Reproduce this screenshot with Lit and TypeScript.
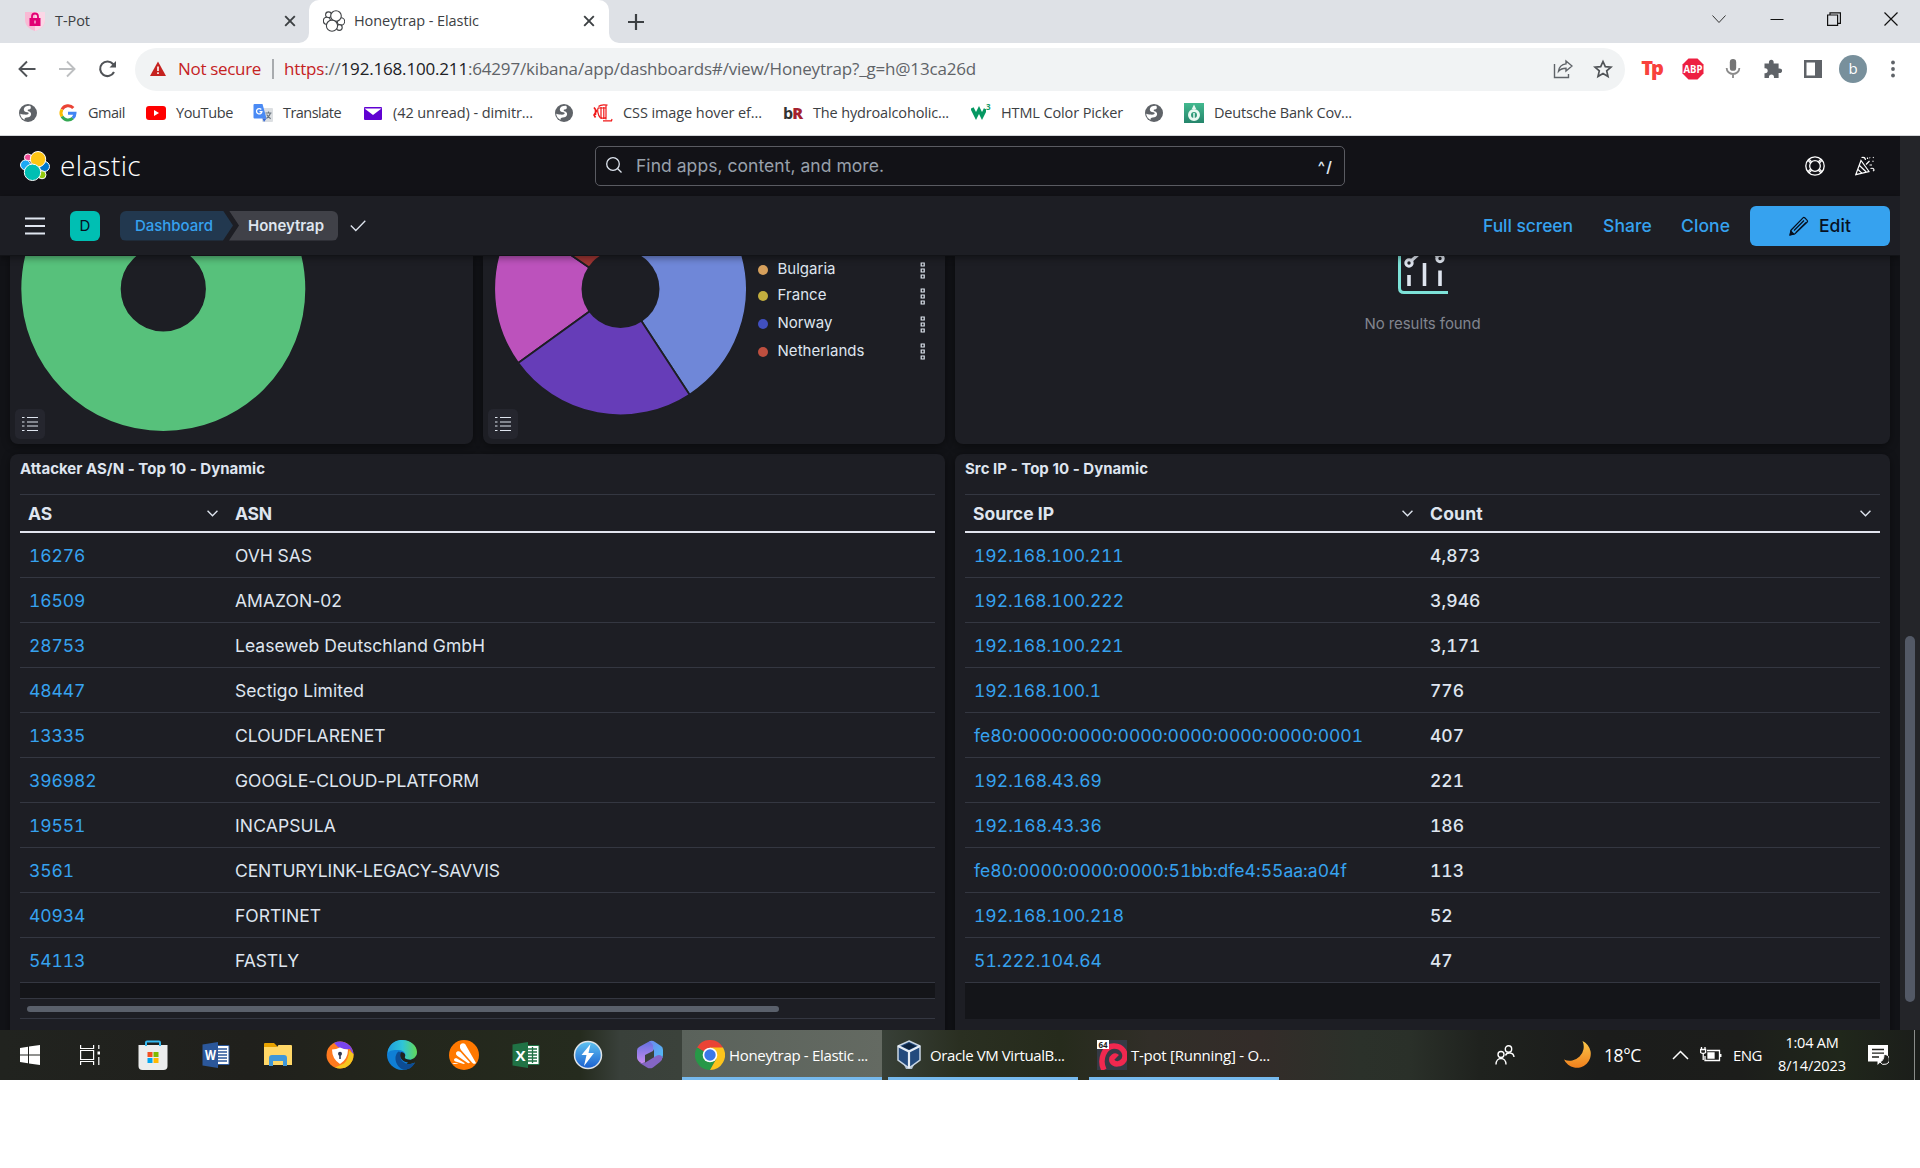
import { LitElement, html, css, svg } from "lit";
import { customElement, property, state } from "lit/decorators.js";

/* Text that spreads its letters to fill a given width. */
@customElement("fit-text")
class FitText extends LitElement {
  @property({ type: Number }) w = 0;
  @state() private spacing = 0;

  static styles = css`
    :host { display: inline-block; white-space: nowrap; }
    .run { display: inline-block; white-space: nowrap; }
  `;

  firstUpdated() {
    const run = this.renderRoot.querySelector(".run") as HTMLElement;
    const count = (this.textContent || "").length;
    if (count && this.w) this.spacing = (this.w - run.getBoundingClientRect().width) / count;
  }

  render() {
    return html`<span class="run" style="letter-spacing:${this.spacing}px"><slot></slot></span>`;
  }
}

const globe = svg`<svg class="i20" viewBox="0 0 20 20"><circle cx="10" cy="10" r="9" fill="#5f6368"/><path d="M12 2.800C9 2.600 6 3.800 5.800 6.200c-.2 2.200 1.600 2.700 3.400 3 1.600.3 1.900 1.300.8 2.100-1.200.8-4.200.4-7.800-.5.300 2.800 1.800 4.900 4.300 6.100-.2-1.500.5-2.400 2.300-2.400 2.200 0 4.100-1 4.300-3.200.1-2-1.400-2.700-2.700-3.100-1-.4-1-1.300 0-1.600 1.300-.4 2.200-.6 2.400-1.700.1-.8 0-1.500-.8-2.100z" fill="#fff"/></svg>`;

const icons: Record<string, unknown> = {
  globe,
  google: svg`<svg class="i20" viewBox="0 0 20 20" fill="none" stroke-width="3"><path d="M15.300 5A7 7 0 0 0 4 6.400" stroke="#ea4335"/><path d="M4 6.400a7 7 0 0 0 0 7.200" stroke="#fbbc05"/><path d="M4 13.600A7 7 0 0 0 14.800 15.200" stroke="#34a853"/><path d="M10 10.200h7a7 7 0 0 1-2.300 5" stroke="#4285f4"/></svg>`,
  youtube: svg`<svg class="i20" viewBox="0 0 20 20"><rect y="3" width="20" height="14" rx="3" fill="#f00"/><path d="M8 7l5 3-5 3z" fill="#fff"/></svg>`,
  translate: svg`<svg class="i20" viewBox="0 0 20 20"><rect x="9" y="5" width="11" height="14" rx="1" fill="#dcdfe2"/><path d="M12.500 10h6M15.500 8.500V10M17.500 10c-.6 2.400-2 4-4 5.500M13.700 11.500c.8 1.700 2 3 4 4.200" stroke="#6b7680" stroke-width="1.100" fill="none"/><path d="M1.500 1h8l4 14.500h-12a1 1 0 0 1-1-1V2a1 1 0 0 1 1-1z" fill="#4a8af4"/><path d="M9.500 15.500h4L11 19z" fill="#3367d6"/><path d="M8.300 6.500A2.700 2.700 0 1 0 8.900 8.600H6.500" fill="none" stroke="#fff" stroke-width="1.300"/></svg>`,
  mail: svg`<svg class="i20" viewBox="0 0 20 20"><rect x="1" y="4" width="18" height="13" rx="1" fill="#6001d2"/><path d="M1.500 5.500h17L10 12z" fill="#fff"/></svg>`,
  cil: svg`<svg class="i20" viewBox="0 0 20 20" fill="none" stroke="#f01818"><path d="M14.500 2.200Q8 1 5.500 3.500M8 4v12M10.800 4v12M13 2.500v14M10 17.800h8.500l.5-1.800M5.500 5h7M8 14.500q2.500 1.500 5 0" stroke-width="1.200"/><path d="M5.500 4.500C4 6 4.500 12 7.500 15" stroke-width="1.200"/><path d="M1 4.500l2.500 3.500L1 12l1.500 2.500M2.500 7v5" stroke-width="1.600"/></svg>`,
  dbank: svg`<svg class="i20" viewBox="0 0 20 20"><defs><linearGradient id="db" x2="0" y2="1"><stop stop-color="#43b98f"/><stop offset="1" stop-color="#25856b"/></linearGradient></defs><rect width="20" height="20" fill="url(#db)"/><path d="M10 1.500l2.200 4.500H7.800z" fill="#e9f9f2"/><circle cx="10" cy="12" r="4.500" fill="none" stroke="#e9f9f2" stroke-width="3"/><path d="M10 10v5" stroke="#e9f9f2" stroke-width="1.500"/></svg>`,
};

interface Mark { icon: string; label: string; w: number; }
const bookmarks: Mark[] = [
  { icon: "globe", label: "", w: 0 },
  { icon: "google", label: "Gmail", w: 37 },
  { icon: "youtube", label: "YouTube", w: 57 },
  { icon: "translate", label: "Translate", w: 58 },
  { icon: "mail", label: "(42 unread) - dimitr...", w: 140 },
  { icon: "globe", label: "", w: 0 },
  { icon: "cil", label: "CSS image hover ef...", w: 139 },
  { icon: "br", label: "The hydroalcoholic...", w: 136 },
  { icon: "w3", label: "HTML Color Picker", w: 122 },
  { icon: "globe", label: "", w: 0 },
  { icon: "dbank", label: "Deutsche Bank Cov...", w: 138 },
];

const asRows: [string, string, number][] = [
  ["16276", "OVH SAS", 77],
  ["16509", "AMAZON-02", 107],
  ["28753", "Leaseweb Deutschland GmbH", 250],
  ["48447", "Sectigo Limited", 129],
  ["13335", "CLOUDFLARENET", 150.5],
  ["396982", "GOOGLE-CLOUD-PLATFORM", 244],
  ["19551", "INCAPSULA", 101],
  ["3561", "CENTURYLINK-LEGACY-SAVVIS", 265],
  ["40934", "FORTINET", 86],
  ["54113", "FASTLY", 64],
];

const ipRows: [string, string, number, number][] = [
  ["192.168.100.211", "4,873", 149.5, 50.5],
  ["192.168.100.222", "3,946", 150, 50.5],
  ["192.168.100.221", "3,171", 149.5, 50.5],
  ["192.168.100.1", "776", 127, 34],
  ["fe80:0000:0000:0000:0000:0000:0000:0001", "407", 389, 34],
  ["192.168.43.69", "221", 128, 34],
  ["192.168.43.36", "186", 128, 34],
  ["fe80:0000:0000:0000:51bb:dfe4:55aa:a04f", "113", 373, 34],
  ["192.168.100.218", "52", 150, 22.7],
  ["51.222.104.64", "47", 128, 22.7],
];

const legend: [string, string, number][] = [
  ["Bulgaria", "#d6a05c", 58],
  ["France", "#c2ae3e", 49],
  ["Norway", "#4150c0", 55],
  ["Netherlands", "#be4f3f", 87],
];

const chevron = svg`<svg width="13" height="9" viewBox="0 0 14 10" fill="none" stroke="#dfe5ef" stroke-width="1.500"><path d="M1.500 2L7 7.500 12.500 2"/></svg>`;
const closeX = svg`<svg class="i14" viewBox="0 0 14 14" stroke="#3c4043" stroke-width="1.900"><path d="M2.200 2.200l9.600 9.600M11.800 2.200l-9.600 9.600"/></svg>`;

@customElement("app-root")
class AppRoot extends LitElement {
  static styles = css`
    :host { display: block; width: 1920px; height: 1168px; overflow: hidden; background: #fff; font-family: "Open Sans", "Noto Sans", sans-serif; }
    * { box-sizing: border-box; }
    svg { display: block; flex: none; }
    .i14 { width: 14px; height: 14px; }
    .i20 { width: 20px; height: 20px; }
    .i22 { width: 22px; height: 22px; }

    /* browser chrome */
    .strip { display: grid; grid-template-columns: 309px 300px 1fr; height: 43px; background: #fff; color: #3c4043; font-size: 14.500px; }
    .tab-off { display: grid; grid-template-columns: 20px 1fr 14px; gap: 10px; align-items: center; padding: 0 12px 2px 25px; background: #dee1e6; border-bottom-right-radius: 10px; }
    .tab-back { background: linear-gradient(#dee1e6 20px, #fff 20px); }
    .tab-on { height: 43px; display: grid; grid-template-columns: 22px 1fr 14px; gap: 9px; align-items: center; padding: 0 13px 2px 14px; background: #fff; border-radius: 10px 10px 0 0; }
    .tab-rest { display: flex; align-items: center; background: #dee1e6; border-bottom-left-radius: 10px; padding-left: 19px; }
    .win { margin-left: auto; display: grid; grid-template-columns: repeat(4, 57.300px); justify-items: center; padding-bottom: 6px; }
    .toolbar { display: grid; grid-template-columns: 135px 1490px 1fr; height: 48px; margin-top: 5px; align-items: center; }
    .nav-icons { display: grid; grid-template-columns: 20px 20px 20px; gap: 20px; padding: 0 0 6px 17px; align-items: center; }
    .omni { display: grid; grid-template-columns: 16px 83px 2px 1fr 22px 22px; height: 43px; border-radius: 22px; background: #f1f3f4; align-items: center; padding: 0 18px 2px 15px; font-size: 17px; color: #5f6368; margin-bottom: 5px; }
    .omni .warn { color: #c5221f; margin-left: 12px; }
    .omni .sep { width: 2px; height: 20px; background: #a8abae; margin-left: 23px; }
    .omni .url { margin-left: 33px; }
    .omni .red { color: #c5221f; }
    .omni .blk { color: #202124; }
    .omni .star { margin-left: 8px; }
    .omni .share { margin-left: -10px; }
    .ext { display: grid; grid-template-columns: repeat(7, 40px); justify-items: center; align-items: center; padding-left: 8px; padding-bottom: 6px; }
    .tp { font: 800 20px/22px "Open Sans", sans-serif; color: #f8423c; letter-spacing: -2px; margin: -3px 0 0 -3px; }
    .avatar { width: 28px; height: 28px; border-radius: 50%; background: #78909c; color: #fff; font-size: 15px; line-height: 27px; text-align: center; }
    .marks { display: grid; grid-template-columns: 40px 88px 107px 110px 191px 39px 190px 188px 173px 40px 180px; height: 39px; padding: 0 0 6px 18px; align-items: center; color: #3c4043; font-size: 14.500px; }
    .mark { display: flex; align-items: center; gap: 10px; }
    .br { width: 20px; font: 700 16px/20px "Open Sans", sans-serif; letter-spacing: -1px; color: #333; }
    .br b { color: #a5222f; }
    .w3 { display: flex; width: 20px; }
    .w3 small { font: 700 8px/8px "Open Sans", sans-serif; color: #159c6a; }
    .edge { height: 1px; background: #d4d6d9; }

    /* kibana */
    .app { display: grid; grid-template-columns: 1900px 20px; height: 894px; font-family: Inter, sans-serif; color: #dfe5ef; background: #121317; overflow: hidden; }
    .main { overflow: hidden; height: 894px; }
    .top { display: grid; grid-template-columns: 575px 750px 1fr; height: 60px; padding-left: 20px; align-items: center; background: #121217; }
    .brand { display: flex; gap: 10px; align-items: center; font: 300 28px/34px "Open Sans", sans-serif; color: #fff; }
    .brand fit-text { margin-top: -3px; }
    .logo { width: 30px; height: 30px; }
    .search { display: flex; align-items: center; height: 40px; border: 1px solid #5a5b62; border-radius: 5px; padding: 0 12px 2px 9px; font-size: 17.500px; color: #98a0ab; }
    .search .q { margin-left: 13px; }
    .search .key { margin-left: auto; color: #dfe5ef; font-weight: 600; font-size: 15px; margin-top: 3px; }
    .acts { display: flex; justify-content: flex-end; gap: 30px; padding-right: 25px; }
    .bar { position: relative; z-index: 2; display: flex; align-items: center; height: 60px; padding: 0 10px 0 25px; background: #1d1e24; border-bottom: 1px solid #121317; box-shadow: 0 2px 7px rgba(0, 0, 0, 0.4); }
    .sq { width: 30px; height: 30px; margin-left: 25px; border-radius: 6px; background: #00bfb3; color: #07101f; font-size: 15px; line-height: 30px; text-align: center; }
    .crumbs { display: flex; margin: 0 12px 0 20px; font-size: 15px; line-height: 30px; font-weight: 500; }
    .c1 { width: 113px; height: 30px; padding-left: 15px; border-radius: 6px 0 0 6px; background: #22384f; color: #36a2ef; clip-path: polygon(0 0, 103px 0, 113px 50%, 103px 100%, 0 100%); }
    .c2 { width: 109px; height: 30px; margin-left: -4px; padding-left: 19px; border-radius: 0 6px 6px 0; background: #404148; color: #dfe5ef; font-weight: 600; clip-path: polygon(0 0, 100% 0, 100% 100%, 0 100%, 10px 50%); }
    .menu { margin-left: auto; display: grid; grid-template-columns: 120px 78px 69px 140px; color: #36a2ef; font-size: 17.500px; align-items: center; font-weight: 500; }
    .edit { display: flex; gap: 10px; align-items: center; height: 40px; padding-left: 39px; border-radius: 6px; background: #36a2ef; color: #07101f; }
    .board { display: grid; grid-template-columns: 463px 462px 935px; column-gap: 10px; padding: 0 10px; }
    .panel { position: relative; background: #1d1e24; border-radius: 0 0 8px 8px; box-shadow: 0 2px 8px rgba(0, 0, 0, 0.45); height: 188px; overflow: hidden; }
    .clip { display: flex; }
    .legend { display: grid; grid-template-rows: 25px repeat(3, 27.700px); width: 180px; font-size: 15px; }
    .leg { display: grid; grid-template-columns: 10px 1fr 8px; gap: 9.500px; align-items: center; width: 169.500px; }
    .dot { width: 10px; height: 10px; border-radius: 50%; margin-top: 3px; }
    .kebab { width: 6px; height: 17px; margin-top: 3px; }
    .list { position: absolute; left: 5px; bottom: 5px; width: 30px; height: 30px; border-radius: 5px; background: #25262e; display: grid; place-items: center; }
    .none { display: flex; flex-direction: column; align-items: center; color: #81858f; font-size: 15px; gap: 20px; }
    .none svg { margin-left: 2px; }
    .tables { display: grid; grid-template-columns: 935px 935px; gap: 10px; padding: 10px 10px 0; }
    .tpanel { height: 590px; border-radius: 8px 8px 0 0; background: #1d1e24; box-shadow: 0 2px 8px rgba(0, 0, 0, 0.45); padding: 0 10px; }
    .title { height: 40px; line-height: 30px; font-size: 15px; font-weight: 700; }
    .hd { display: grid; height: 39px; border-top: 1px solid #343741; border-bottom: 2px solid #e2e4ee; align-items: center; font-size: 17.500px; font-weight: 700; }
    .row { display: grid; height: 45px; border-bottom: 1px solid #343741; align-items: center; font-size: 17.500px; }
    .as { grid-template-columns: 207px 1fr; }
    .ip { grid-template-columns: 457px 1fr; }
    .cell { display: flex; align-items: center; justify-content: space-between; padding: 0 8px; }
    .num { font-feature-settings: "tnum"; font-weight: 500; }
    .lnk { color: #36a2ef; padding-left: 9px; font-feature-settings: "tnum"; }
    .foot { height: 16px; background: #141519; border-bottom: 1px solid #343741; }
    .hs { height: 20px; padding: 7px 0 0 7px; border-bottom: 1px solid #343741; }
    .thumb { width: 752px; height: 6px; border-radius: 4px; background: #5a606b; }
    .foot2 { height: 36px; background: #141519; }
    .scroll { background: #242529; padding: 500px 5px 0; }
    .vthumb { height: 366px; border-radius: 5px; background: #535966; }

    /* taskbar */
    .task { display: grid; grid-template-columns: 682px 200px 6px 190px 11px 190px 1fr; height: 50px; color: #fff; font-size: 15px; background: linear-gradient(90deg, #21231f 0, #20201c 250px, #23261c 400px, #252b1e 580px, #39403a 620px, #3b423b 680px, #384038 880px, #2a2f21 960px, #262b1c 1060px, #312e28 1150px, #332c29 1260px, #2b312a 1360px, #2a3029 1410px, #1f221e 1480px, #1b1c1b 1600px, #1c1d1b 1740px, #20271b 1840px, #1b1d1a 1920px); }
    .pins { display: grid; grid-template-columns: 60px 60px 65px repeat(8, 62px); align-items: center; justify-items: center; height: 50px; }
    .btn { display: flex; align-items: center; height: 50px; border-bottom: 3px solid #76b9ed; padding-top: 3px; }
    .b1 { background: linear-gradient(90deg, #5a625b, #646a62); padding-left: 13px; gap: 4px; }
    .b2 { padding-left: 6px; gap: 6px; }
    .b3 { padding-left: 8px; gap: 4px; }
    .tray { display: grid; grid-template-columns: 236px 77px 80px 28px 33px 45px 68px 43px 1fr; align-items: center; height: 50px; }
    .tray .end { justify-self: end; }
    .clock { display: flex; flex-direction: column; align-items: center; line-height: 23px; font-size: 14.500px; margin-top: -3px; }
    .peek { width: 1px; height: 50px; margin: 0 5px 0 auto; background: #8a8c89; }
    .deg { font-size: 17.500px; padding-left: 12px; }
    .i30 { width: 30px; height: 30px; }
    .i28 { width: 28px; height: 28px; }
  `;

  private markIcon(name: string) {
    if (name === "br") return html`<span class="br">b<b>R</b></span>`;
    if (name === "w3")
      return html`<span class="w3"><svg width="15" height="20" viewBox="0 0 15 20" fill="none" stroke="#059862" stroke-width="3.600"><path d="M1 5l4 8 3-6 3 6 3.500-7"/></svg><small>3</small></span>`;
    return icons[name];
  }

  private browser() {
    return html`
      <div class="strip">
        <div class="tab-off">
          <svg width="20" height="20" viewBox="0 0 20 20"><path d="M0 1h20v8c0 5-4 9-10 11C4 18 0 14 0 9z" fill="#f9b9d4"/><path d="M10 1h10v8c0 5-4 9-10 11z" fill="#fbd7e6"/><rect x="4.500" y="7" width="11" height="8" fill="#e20074"/><path d="M7 7V5.500a3 3 0 0 1 6 0V7" fill="none" stroke="#e20074" stroke-width="1.800"/><path d="M10 9.500v3" stroke="#fff"/></svg>
          <fit-text w="35">T-Pot</fit-text>${closeX}
        </div>
        <div class="tab-back"><div class="tab-on">
          <svg class="i22" viewBox="0 0 22 22" fill="#fff" stroke="#404346" stroke-width="1.100"><circle cx="5.500" cy="4.800" r="2.900"/><circle cx="3.900" cy="10.800" r="3.500"/><circle cx="18" cy="11.400" r="3.700"/><circle cx="16.300" cy="17.500" r="2.900"/><circle cx="13" cy="6" r="5.300"/><circle cx="9" cy="15.700" r="5.600"/></svg>
          <fit-text w="125">Honeytrap - Elastic</fit-text>${closeX}
        </div></div>
        <div class="tab-rest">
          <svg width="16" height="16" viewBox="0 0 16 16" stroke="#3c4043" stroke-width="2.200"><path d="M8 0v16M0 8h16"/></svg>
          <div class="win">
            <svg width="14" height="14" viewBox="0 0 14 14" fill="none" stroke="#333"><path d="M.5 3.500L7 10.500 13.500 3.500"/></svg>
            <svg width="14" height="14" viewBox="0 0 14 14" stroke="#111"><path d="M.5 7.500h13"/></svg>
            <svg width="14" height="14" viewBox="0 0 14 14" fill="none" stroke="#111" stroke-width="1.200"><path d="M.6 3h10v10.400H.6zM3 3V.8h10.400v10.500H11"/></svg>
            <svg width="14" height="14" viewBox="0 0 14 14" stroke="#111" stroke-width="1.200"><path d="M.5.500l13 13M13.500.500l-13 13"/></svg>
          </div>
        </div>
      </div>
      <div class="toolbar">
        <div class="nav-icons">
          <svg class="i20" viewBox="0 0 20 20" fill="none" stroke="#505357" stroke-width="1.900"><path d="M18.500 10H3M10 2.500L2.500 10l7.500 7.500"/></svg>
          <svg class="i20" viewBox="0 0 20 20" fill="none" stroke="#bdbfc1" stroke-width="1.900"><path d="M2 10h15M10 2.500l7.500 7.500-7.500 7.500"/></svg>
          <svg class="i20" viewBox="0 0 20 20" fill="none" stroke="#505357" stroke-width="2.100"><path d="M17 13A7.300 7.300 0 1 1 16 5l2 2.300"/><path d="M19 2v6.500h-6.500z" fill="#505357" stroke="none"/></svg>
        </div>
        <div class="omni">
          <svg width="16" height="16" viewBox="0 0 16 16"><path d="M8 .5L16 15H0z" fill="#c5221f"/><path d="M8 5.500v4.500M8 11.200v1.800" stroke="#fff" stroke-width="1.600"/></svg>
          <fit-text class="warn" w="83">Not secure</fit-text>
          <span class="sep"></span>
          <fit-text class="url" w="692"><span class="red">https</span>://<span class="blk">192.168.100.211</span>:64297/kibana/app/dashboards#/view/Honeytrap?_g=h@13ca26d</fit-text>
          <svg class="i20 share" viewBox="0 0 20 20" fill="none" stroke="#5f6368" stroke-width="1.400"><path d="M1.500 5v13.500h14V15"/><path d="M13 2l6 5-6 5V9.300c-3.500 0-5.500.8-7.500 3 .5-4 3-6.900 7.500-7.400z"/></svg>
          <svg class="i20 star" viewBox="0 0 20 20" fill="none" stroke="#505357" stroke-width="1.700"><path d="M10 2.500l2.300 5.200 5.700.5-4.300 3.700 1.300 5.500-5-3-5 3 1.300-5.500L2 8.200l5.700-.5z"/></svg>
        </div>
        <div class="ext">
          <span class="tp">Tp</span>
          <svg class="i22" viewBox="0 0 22 22"><path d="M6.500.5h9l6 6v9l-6 6h-9l-6-6v-9z" fill="#ed1f41"/><text x="11" y="15" text-anchor="middle" font-size="11" font-weight="700" fill="#fff" font-family="Open Sans" textLength="19" lengthAdjust="spacingAndGlyphs">ABP</text></svg>
          <svg class="i20" viewBox="0 0 20 22"><rect x="6.500" y="0" width="7" height="13" rx="3.500" fill="#757575"/><path d="M3 10a7 6.500 0 0 0 14 0M10 16.500V21" fill="none" stroke="#8a8a8a" stroke-width="2"/></svg>
          <svg class="i20" viewBox="0 0 20 20"><path d="M1.500 4.500H6C5.600 2 6.600.8 8.300.8s2.700 1.200 2.300 3.700h5v5c2-.4 3.500.5 3.500 2.200s-1.500 2.600-3.500 2.200V19h-4.700c.4-2.200-.6-3.500-2.400-3.500S5.600 16.800 6 19H1.500v-4.700c2.200.3 3.200-.9 3.200-2.500S3.700 9 1.500 9.300z" fill="#5f6368"/></svg>
          <svg class="i20" viewBox="0 0 20 20"><path d="M1 1h18v18H1zM3.500 3.500v13H12v-13z" fill="#5f6368" fill-rule="evenodd"/></svg>
          <span class="avatar">b</span>
          <svg width="4" height="18" viewBox="0 0 4 18" fill="#5f6368"><circle cx="2" cy="2.500" r="1.900"/><circle cx="2" cy="9" r="1.900"/><circle cx="2" cy="15.500" r="1.900"/></svg>
        </div>
      </div>
      <div class="marks">
        ${bookmarks.map((m) => html`<div class="mark">${this.markIcon(m.icon)}${m.label ? html`<fit-text w=${m.w}>${m.label}</fit-text>` : ""}</div>`)}
      </div>
      <div class="edge"></div>
    `;
  }

  private listButton() {
    return html`<span class="list"><svg width="16" height="16" viewBox="0 0 16 16" stroke="#dfe5ef" stroke-width="1.200"><path d="M0 1.500h2.500M5 1.500h11M0 6h2.500M5 6h11M0 10h2.500M5 10h11M0 14.500h2.500M5 14.500h11"/></svg></span>`;
  }

  private header() {
    return html`
      <div class="top">
        <div class="brand">
          <svg class="logo" viewBox="0 0 30 30" stroke="#fff" stroke-width="1"><circle cx="8" cy="6.500" r="3.600" fill="#f04e98"/><circle cx="5.500" cy="14" r="5" fill="#1ba9f5"/><circle cx="24.500" cy="15.500" r="5" fill="#0077cc"/><circle cx="22" cy="23.800" r="4" fill="#93c90e"/><circle cx="18" cy="8.200" r="7.700" fill="#fec514"/><circle cx="12.500" cy="21.300" r="8.200" fill="#00bfb3"/></svg>
          <fit-text w="81">elastic</fit-text>
        </div>
        <div class="search">
          <svg width="18" height="18" viewBox="0 0 18 18" fill="none" stroke="#dfe5ef" stroke-width="1.300"><circle cx="8" cy="8" r="6.300"/><path d="M12.500 12.500l4 4"/></svg>
          <fit-text class="q" w="248">Find apps, content, and more.</fit-text>
          <span class="key">^&hairsp;/</span>
        </div>
        <div class="acts">
          <svg class="i20" viewBox="0 0 20 20" fill="none" stroke="#fff" stroke-width="1.300"><circle cx="10" cy="10" r="9.200"/><circle cx="10" cy="10" r="5.300"/><path d="M4 3.200l2.600 2.600M3 4.400l2.600 2.600M16 3.200l-2.600 2.600M17 4.400l-2.600 2.600M4 16.800l2.600-2.600M3 15.600L5.600 13M16 16.800l-2.600-2.600M17 15.600L14.400 13"/></svg>
          <svg class="i20" viewBox="0 0 20 20" fill="none" stroke="#fff" stroke-width="1.200"><path d="M6 4.500L.8 18.600 14 15.500zM4.500 9.500l6.500 6.300M3 13.500l3.800 3.600M6 4.500l8 11M6.500 1.500q3.500-1 4 2.500M11 8.500l3.500-3.500M14.500 9h2.500M15.500 12.500q3.500-1 3.500 1.800l-1 .8M14.500 1.500l.6.600M18 1.200l.6.600M17.500 5.500l1-.6M12.500 1.500v1.500"/></svg>
        </div>
      </div>
      <div class="bar">
        <svg width="20" height="20" viewBox="0 0 20 20" stroke="#dfe5ef" stroke-width="2"><path d="M0 2.500h20M0 10h20M0 17.500h20"/></svg>
        <span class="sq">D</span>
        <div class="crumbs"><span class="c1"><fit-text w="78">Dashboard</fit-text></span><span class="c2"><fit-text w="76">Honeytrap</fit-text></span></div>
        <svg width="16" height="12" viewBox="0 0 16 12" fill="none" stroke="#dfe5ef" stroke-width="1.300"><path d="M.8 5.500l5 5L15.300.800"/></svg>
        <div class="menu">
          <fit-text w="90">Full screen</fit-text><fit-text w="49">Share</fit-text><fit-text w="49">Clone</fit-text>
          <span class="edit"><svg width="20" height="20" viewBox="0 0 20 20" fill="none" stroke="#07101f" stroke-width="1.200"><path d="M2.200 14L14 1.800q.8-.8 1.700 0l2.500 2.500q.8.800 0 1.700L6 17.800l-4.800 1zM5 14.500L15 4.500M7 16.500l10-10"/><path d="M1 19l.8-4 3 3.200z" fill="#07101f"/></svg><fit-text w="32">Edit</fit-text></span>
        </div>
      </div>
    `;
  }

  private board() {
    return html`
      <div class="board">
        <div class="panel">
          <svg width="463" height="188" viewBox="10 256 463 188"><circle cx="163.300" cy="289" r="92.300" fill="none" stroke="#57c17b" stroke-width="99.400"/></svg>
          ${this.listButton()}
        </div>
        <div class="panel clip">
          <svg width="275" height="188" viewBox="483 256 275 188" stroke="#1d1e24" stroke-width="1.800">
            <path d="M620.500 289L518.200 363A126.300 126.300 0 0 1 516.300 217.500z" fill="#bc52bc"/>
            <path d="M620.500 289L516.300 217.500A126.300 126.300 0 0 1 620.500 162.700z" fill="#9e3533"/>
            <path d="M620.500 289V162.700A126.300 126.300 0 0 1 689.600 394.700z" fill="#6f87d8"/>
            <path d="M620.500 289L689.600 394.700A126.300 126.300 0 0 1 518.200 363z" fill="#663db8"/>
            <circle cx="620.500" cy="289" r="39" fill="#1d1e24" stroke="none"/>
          </svg>
          <div class="legend">
            ${legend.map(([n, c, w]) => html`<div class="leg"><span class="dot" style="background:${c}"></span><fit-text w=${w}>${n}</fit-text><svg class="kebab" viewBox="0 0 6 17" fill="none" stroke="#dfe5ef" stroke-width="1.200"><path d="M1.200 1h3v3h-3zM1.200 7h3v3h-3zM1.200 13h3v3h-3z"/></svg></div>`)}
          </div>
          ${this.listButton()}
        </div>
        <div class="panel none">
          <svg width="51" height="38" viewBox="1398 256 51 38" fill="none"><path d="M1399.500 254v34q0 4.500 4.500 4.500h44" stroke="#7de2d8" stroke-width="3"/><path d="M1409 275v11M1424.500 263v23M1440 270.500V286" stroke="#dfe5ef" stroke-width="3.600"/><circle cx="1409" cy="263" r="3.200" stroke="#dfe5ef" stroke-width="3"/><circle cx="1440" cy="258.500" r="3.200" stroke="#dfe5ef" stroke-width="3"/><path d="M1411.500 260.500l8-7M1437 256l-5-4" stroke="#dfe5ef" stroke-width="3"/></svg>
          <fit-text w="116">No results found</fit-text>
        </div>
      </div>
      <div class="tables">
        <div class="tpanel">
          <div class="title"><fit-text w="245">Attacker AS/N - Top 10 - Dynamic</fit-text></div>
          <div class="hd as"><span class="cell"><fit-text w="24">AS</fit-text>${chevron}</span><span class="cell"><fit-text w="37">ASN</fit-text></span></div>
          ${asRows.map(([a, n, w]) => html`<div class="row as"><span class="cell lnk"><fit-text w=${a.length * 11.25}>${a}</fit-text></span><span class="cell"><fit-text w=${w}>${n}</fit-text></span></div>`)}
          <div class="foot"></div>
          <div class="hs"><div class="thumb"></div></div>
        </div>
        <div class="tpanel">
          <div class="title"><fit-text w="183">Src IP - Top 10 - Dynamic</fit-text></div>
          <div class="hd ip"><span class="cell"><fit-text w="81">Source IP</fit-text>${chevron}</span><span class="cell"><fit-text w="53">Count</fit-text>${chevron}</span></div>
          ${ipRows.map(([a, n, w, nw]) => html`<div class="row ip"><span class="cell lnk"><fit-text w=${w}>${a}</fit-text></span><span class="cell num"><fit-text w=${nw}>${n}</fit-text></span></div>`)}
          <div class="foot2"></div>
        </div>
      </div>
    `;
  }

  private taskbar() {
    return html`
      <div class="task">
        <div class="pins">
          <svg class="i20" viewBox="0 0 20 20" fill="#fff"><path d="M0 3l8-1.200v7.700H0zM9 1.600L20 0v9.500H9zM0 10.500h8v7.700L0 17zM9 10.500h11V20L9 18.400z"/></svg>
          <svg class="i20" viewBox="0 0 20 20" fill="none" stroke="#fff" stroke-width="1.200"><path d="M.6 0v3.500h13V0M.6 5.500h13v9H.6zM.6 20v-3.500h13V20M18.800 0v4M18.800 12v8"/><path d="M17.500 8h2.600" stroke-width="3"/></svg>
          <svg class="i30" viewBox="0 0 30 30"><path d="M8 6V2.500Q8 1.500 9 1.500h12q1 0 1 1V6" fill="none" stroke="#35b9f1" stroke-width="2"/><path d="M.5 5h29v21q0 4-4 4h-21q-4 0-4-4z" fill="#eceded"/><path d="M8 6V4.500M22 6V4.500" stroke="#35b9f1" stroke-width="2"/><path d="M9.500 12h5v5h-5z" fill="#f25022"/><path d="M15.500 12h5v5h-5z" fill="#7fba00"/><path d="M9.500 18h5v5h-5z" fill="#00a4ef"/><path d="M15.500 18h5v5h-5z" fill="#ffb900"/></svg>
          <svg class="i28" viewBox="0 0 28 28"><path d="M13 4.500h14v19H13z" fill="#fff" stroke="#2b579a"/><path d="M15 8h10M15 11h10M15 14h10M15 17h10M15 20h10" stroke="#2b579a" stroke-width="1.400"/><path d="M.5 3.500L16 1v26L.5 24.500z" fill="#2b579a"/><text x="8.500" y="18.500" text-anchor="middle" font-size="13.500" font-weight="700" fill="#fff" font-family="Open Sans" textLength="11" lengthAdjust="spacingAndGlyphs">W</text></svg>
          <svg class="i28" viewBox="0 0 28 28"><path d="M0 3q0-1 1-1h9l3 3v3H0z" fill="#e8a200"/><path d="M0 6h13l1.500-2H27q1 0 1 1v19H0z" fill="#ffd767"/><path d="M5 25v-8q0-3 3-3h12q3 0 3 3v8h-4v-5h-10v5z" fill="#3f97d9"/></svg>
          <svg class="i28" viewBox="0 0 28 28"><circle cx="14" cy="14" r="13.500" fill="#ff7a1f"/><path d="M8 2a13.500 13.500 0 0 1 19.500 12L24 8q-8 1-12-2z" fill="#7a45f0"/><path d="M27.500 13A13.500 13.500 0 0 1 9 26.500l9-4q5-5 5-13z" fill="#f6c61f"/><path d="M6 8.500q4 0 8-2 4 2 8 2 0 9.500-8 14.500Q6 18 6 8.500z" fill="#fff"/><circle cx="14" cy="12.800" r="2" fill="#2d3650"/><path d="M14 13v5" stroke="#2d3650" stroke-width="1.600"/></svg>
          <svg class="i30" viewBox="0 0 30 30"><defs><linearGradient id="eg" x1="0" x2="1"><stop stop-color="#1f9ede"/><stop offset=".5" stop-color="#2fc4d8"/><stop offset="1" stop-color="#63d957"/></linearGradient></defs><path d="M29.500 15C30 6 23 0 15 0S0 7 0 15s7 15 15 15c6 0 10.500-3 13-7.500C25 24 22 24.500 19.500 23.500z" fill="#0f7fd6"/><path d="M1 10C4 2 10 0 15 0c9 0 15 6 15 12 0 5-4 7.500-7.500 7.500-3.500 0-5.500-1-4.500-2.500 1.500-3-1-7-6.500-7S3 10 1 13z" fill="url(#eg)"/><path d="M11.500 11.500C5 17 10 29 17.500 29.700 23 29.500 26 26.500 28 22.500c-3 1.700-6 2-9 1-5-2-7.500-7-4-11z" fill="#0d4c94"/><path d="M14.500 12c-3 3.500-.5 9.500 5.500 10.300 4 .4 6.500-.8 8.500-2.300l.5-1c-2 1-5 1.300-8 .6-2.500-.6-3.800-1.600-3-3.100.8-1.800-.5-4-3.500-4.500z" fill="#20221d"/></svg>
          <svg class="i30" viewBox="0 0 30 30"><circle cx="15" cy="15" r="15" fill="#ff7800"/><path d="M11 5.500c1-3 5-3 6 0L27 23c-1 1.500-3 .8-4-.5L12 10q-1.500-2-1-4.500zM7 13c.5-2 3-2.500 4.500-1L21 22.500c-1 1-2 .8-3 0L8.500 16q-1.800-1.200-1.500-3zM5 19.500c.5-1.300 2.300-1.500 3.500-.8l7.500 4.600c-.8.8-2 .7-3 .3l-6.500-2q-1.700-.8-1.500-2.100zM3 23.500q2-1 6.500 0-3 1-6.500 0z" fill="#fff"/></svg>
          <svg class="i28" viewBox="0 0 28 28"><path d="M13 4.500h14v19H13z" fill="#fff" stroke="#207245"/><path d="M16 8h9M16 11h9M16 14h9M16 17h9M16 20h9M20.500 6v16" stroke="#207245" stroke-width="1.300"/><path d="M.5 3.500L16 1v26L.5 24.500z" fill="#207245"/><text x="8.500" y="19.500" text-anchor="middle" font-size="15" font-weight="700" fill="#fff" font-family="Open Sans">X</text></svg>
          <svg class="i30" viewBox="0 0 30 30"><defs><linearGradient id="dm" x2="0" y2="1"><stop stop-color="#5fc4f2"/><stop offset="1" stop-color="#1a5fd0"/></linearGradient></defs><circle cx="15" cy="15" r="13.500" fill="url(#dm)" stroke="#dfe3e6" stroke-width="1.500"/><path d="M17.500 4L8.500 15h5L11 26l10-13h-5.500z" fill="#fff"/></svg>
          <svg class="i30" viewBox="0 0 30 30"><defs><linearGradient id="ma" x2="1" y2="1"><stop stop-color="#6f86ee"/><stop offset="1" stop-color="#4cc4f5"/></linearGradient><linearGradient id="mb" x2="0" y2="1"><stop stop-color="#6470e0"/><stop offset="1" stop-color="#c58bee"/></linearGradient></defs><path d="M14 1.500q3-1.500 6 .5l6 4q2 1.200 2 4v5q0 3-2 4l-7 3.500V11z" fill="url(#ma)"/><path d="M14.500 1.200L18 5v6l-8 4v7.500l-3.500.8Q2 20.500 2 17.500v-7Q2 8 4.500 6.700z" fill="url(#mb)"/><path d="M27.500 17q0 3.500-2.500 5l-7 5.500q-3 1.700-6 0L4 22.500q5 1.500 8-1l9-5.500q4-2.500 6.500 1z" fill="#8465c4"/></svg>
        </div>
        <div class="btn b1">
          <svg class="i30" viewBox="0 0 30 30"><path d="M15 15L2 7.500A15 15 0 0 1 28 7.500z" fill="#ea4335"/><path d="M15 15L2 7.500A15 15 0 0 0 15 30l6.500-11.500z" fill="#279847"/><path d="M15 15l6.500 3.500L15 30A15 15 0 0 0 28 7.500H15z" fill="#fcc41c"/><circle cx="15" cy="15" r="7.300" fill="#fff"/><circle cx="15" cy="15" r="5.700" fill="#3b78e7"/></svg>
          <fit-text w="139">Honeytrap - Elastic ...</fit-text>
        </div><span></span>
        <div class="btn b2">
          <svg class="i30" viewBox="0 0 30 30"><path d="M10 25h10l-2 4h-6z" fill="#aebccc"/><path d="M15 1l11 5v14l-11 8-11-8V6z" fill="#234a7d" stroke="#c9d6e4" stroke-width="1.500"/><path d="M4 6l11 5.500L26 6M15 11.500V28" fill="none" stroke="#e6edf5" stroke-width="2.200"/><path d="M15 3l7 3.200-7 3.300-7-3.300z" fill="#0e2440"/></svg>
          <fit-text w="134.500">Oracle VM VirtualB...</fit-text>
        </div><span></span>
        <div class="btn b3">
          <svg class="i30" viewBox="0 0 30 30"><rect width="30" height="30" fill="#353a45"/><path d="M7 30C2 20 7 6 17 6c9 0 13 8 10 14-3 5-10 5-12 1-1-4 3-6 5-4" fill="none" stroke="#f0284f" stroke-width="5.500"/><rect width="12" height="9" fill="#fff"/><text x="6" y="7.500" text-anchor="middle" font-size="8" font-weight="700" fill="#222" font-family="Open Sans">64</text></svg>
          <fit-text w="139">T-pot [Running] - O...</fit-text>
        </div>
        <div class="tray">
          <svg class="end" width="20" height="20" viewBox="0 0 20 20" fill="none" stroke="#fff" stroke-width="1.400"><circle cx="13.500" cy="4" r="3.200"/><path d="M10.500 10.500c1-3.500 8-3.500 8.500 1.500"/><circle cx="6" cy="9.500" r="3"/><path d="M1 19.500c0-8 10-8 10 0"/></svg>
          <svg class="end" width="28" height="28" viewBox="0 0 28 28"><defs><linearGradient id="mn" x2="0" y2="1"><stop stop-color="#fbc84a"/><stop offset="1" stop-color="#f07f1c"/></linearGradient></defs><path d="M18.500 0A14 14 0 1 1 0 18.500 14 14 0 0 0 18.500 0z" fill="url(#mn)"/></svg>
          <span class="deg"><fit-text w="37">18°C</fit-text></span>
          <svg width="17" height="12" viewBox="0 0 17 12" fill="none" stroke="#fff" stroke-width="1.500"><path d="M1 10l7.500-7.500L16 10"/></svg>
          <svg width="22" height="16" viewBox="0 0 22 16" fill="none" stroke="#fff" stroke-width="1.300"><path d="M7 3.500h12.500v10H5V9M20.800 7v3"/><path d="M8 6h6v5H8z" fill="#fff"/><path d="M1.500 0v2M5 0v2M.6 2.500h5v3q-2.500 2-5 0zM3.200 6.500V13"/></svg>
          <fit-text w="29">ENG</fit-text>
          <span class="clock"><fit-text w="53">1:04 AM</fit-text><fit-text w="68">8/14/2023</fit-text></span>
          <svg class="end" width="21" height="20" viewBox="0 0 21 20"><path d="M0 0h20v16.500h-7l-3.500 3.500v-3.500H0z" fill="#fff"/><path d="M4 4.500h12M4 8.200h12M4 12h7" stroke="#20221e" stroke-width="1.300"/><path d="M16 9.500a5 5 0 1 1-4 7.500q4-1.500 4-7.500z" fill="#20221e" stroke="#fff"/></svg>
          <span class="peek"></span>
        </div>
      </div>
    `;
  }

  render() {
    return html`
      ${this.browser()}
      <div class="app">
        <div class="main">${this.header()}${this.board()}</div>
        <div class="scroll"><div class="vthumb"></div></div>
      </div>
      ${this.taskbar()}
    `;
  }
}
